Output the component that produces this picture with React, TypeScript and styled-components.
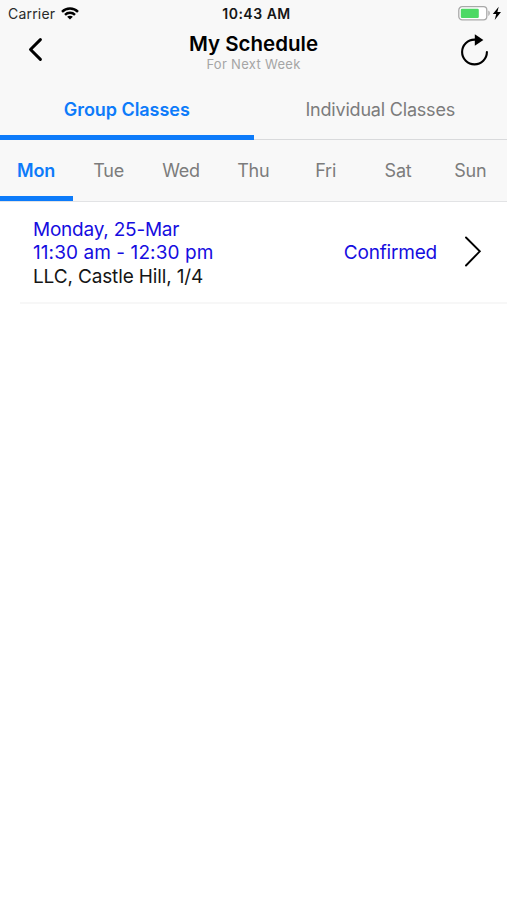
import React from "react";
import styled, { createGlobalStyle } from "styled-components";

const Global = createGlobalStyle`
  * { box-sizing: border-box; }
  body { margin: 0; background: #fff; }
`;

const Screen = styled.main`
  width: 507px;
  height: 900px;
  overflow: hidden;
  display: flex;
  flex-direction: column;
  background: #fff;
  font-family: Inter, "Liberation Sans", sans-serif;
  color: #000;
`;

const StatusBar = styled.div`
  height: 27px;
  flex: none;
  display: grid;
  grid-template-columns: 1fr auto 1fr;
  align-items: center;
  padding: 1px 5px 0 8px;
  background: #f8f8f8;
`;

const Carrier = styled.div`
  display: flex;
  align-items: center;
  gap: 6px;
  font-size: 14px;
  line-height: 18px;
  letter-spacing: 0.2px;
  color: #2a2a2a;

  svg {
    margin-bottom: 2px;
  }
`;

const Clock = styled.div`
  padding-left: 3px;
  font-size: 14px;
  line-height: 18px;
  font-weight: 600;
  letter-spacing: 0.5px;
  color: #151515;
`;

const Power = styled.div`
  display: flex;
  justify-content: flex-end;
  align-items: center;
`;

const NavBar = styled.header`
  height: 52px;
  flex: none;
  display: grid;
  grid-template-columns: 80px 1fr 80px;
  background: #f8f8f8;
`;

const NavButton = styled.button<{ $end?: boolean }>`
  border: 0;
  margin: 0;
  background: none;
  display: flex;
  align-items: flex-start;
  justify-content: ${(p) => (p.$end ? "flex-end" : "flex-start")};
  padding: ${(p) => (p.$end ? "5px 17px 0 0" : "9px 0 0 26px")};
`;

const Heading = styled.div`
  display: flex;
  flex-direction: column;
  align-items: center;
  padding-top: 5px;
`;

const Title = styled.h1`
  margin: 0;
  font-size: 20.5px;
  line-height: 24px;
  font-weight: 600;
  letter-spacing: 0;
`;

const Subtitle = styled.div`
  font-size: 13px;
  line-height: 16px;
  letter-spacing: 0.3px;
  color: #a5a5a5;
`;

const TabBar = styled.nav<{ $height: number; $line: string }>`
  height: ${(p) => p.$height}px;
  flex: none;
  display: flex;
  background: #f8f8f8;
  box-shadow: inset 0 -1px ${(p) => p.$line};
`;

const Tab = styled.button<{ $active?: boolean; $spacing?: number }>`
  flex: 1 1 0;
  min-width: 0;
  margin: 0;
  border: 0;
  padding: 0;
  background: none;
  font-family: inherit;
  font-size: 18px;
  line-height: 24px;
  white-space: nowrap;
  letter-spacing: ${(p) => p.$spacing ?? 0}px;
  font-weight: ${(p) => (p.$active ? 600 : 400)};
  color: ${(p) => (p.$active ? "#0d7bfa" : "#7c7c7c")};
  box-shadow: ${(p) => (p.$active ? "inset 0 -5px #0d7bfa" : "none")};
`;

const DayTab = styled(Tab)`
  ${(p) => p.$active && "flex: 0 0 73px;"}
  margin-bottom: 1px;
  padding-top: 1px;
  padding-right: 1px;
  letter-spacing: -0.25px;
`;

const ClassRow = styled.article`
  height: 102px;
  flex: none;
  margin-left: 20px;
  padding: 0 25px 0 13px;
  display: flex;
  align-items: center;
  border-bottom: 2px solid #f7f7f7;
`;

const Details = styled.div`
  flex: 1;
  display: flex;
  flex-direction: column;
  padding-top: 2px;
`;

const Line = styled.div<{ $tone?: "blue"; $spacing?: number }>`
  font-size: 19px;
  line-height: 23.4px;
  white-space: nowrap;
  letter-spacing: ${(p) => p.$spacing ?? 0}px;
  color: ${(p) => (p.$tone === "blue" ? "#160de0" : "#151515")};
`;

const Status = styled(Line)`
  padding-top: 2px;
`;

const ChevronSlot = styled.div`
  display: flex;
  margin-left: 27px;
`;

const WifiIcon = () => (
  <svg width="18" height="13" viewBox="0 0 18 13" fill="none" stroke="#000" strokeWidth="2.4">
    <path d="M1 4.8C5.4.4 12.6.4 17 4.8" />
    <path d="M4 7.9c2.8-2.8 7.2-2.8 10 0" />
    <path d="M9 12.6 6.1 9.8c1.6-1.5 4.2-1.5 5.8 0Z" fill="#000" stroke="none" />
  </svg>
);

const BatteryIcon = () => (
  <svg width="44" height="16" viewBox="0 0 44 16">
    <rect x="0.8" y="0.7" width="28" height="13.2" rx="3.4" fill="#fff" stroke="#a9a9a9" strokeWidth="1.3" />
    <rect x="2.8" y="2.7" width="18" height="9.2" rx="1.2" fill="#4cd964" />
    <path d="M30.3 4.6c2 .8 2 4.6 0 5.4Z" fill="#a9a9a9" />
    <path d="M40.7 0.8 34.8 8h3.4l-1.5 6 6.3-8h-3.6Z" fill="#000" />
  </svg>
);

const BackIcon = () => (
  <svg width="18" height="27" viewBox="0 0 18 27" fill="none" stroke="#000" strokeWidth="3" strokeLinecap="round" strokeLinejoin="round">
    <path d="M14.4 3.6 4.5 13.5l9.9 9.9" />
  </svg>
);

const RefreshIcon = () => (
  <svg width="30" height="34" viewBox="0 0 30 34">
    <path d="M26.9 20A12.4 12.4 0 1 1 14.5 7.6H18" fill="none" stroke="#000" strokeWidth="2.1" strokeLinecap="round" />
    <path d="M14.8 2.2 23.4 8.1l-8.6 5.7Z" fill="#000" />
  </svg>
);

const ChevronIcon = () => (
  <svg width="18" height="32" viewBox="0 0 18 32" fill="none" stroke="#000" strokeWidth="1.9" strokeLinecap="round">
    <path d="M2 1.5 15.8 15.3 2 29.5" />
  </svg>
);

const days = ["Mon", "Tue", "Wed", "Thu", "Fri", "Sat", "Sun"];

export default function App() {
  return (
    <Screen>
      <Global />
      <StatusBar>
        <Carrier>
          Carrier
          <WifiIcon />
        </Carrier>
        <Clock>10:43 AM</Clock>
        <Power>
          <BatteryIcon />
        </Power>
      </StatusBar>
      <NavBar>
        <NavButton aria-label="Back">
          <BackIcon />
        </NavButton>
        <Heading>
          <Title>My Schedule</Title>
          <Subtitle>For Next Week</Subtitle>
        </Heading>
        <NavButton $end aria-label="Refresh">
          <RefreshIcon />
        </NavButton>
      </NavBar>
      <TabBar $height={61} $line="#d9dadc">
        <Tab $active $spacing={-0.05}>Group Classes</Tab>
        <Tab $spacing={-0.2}>Individual Classes</Tab>
      </TabBar>
      <TabBar $height={62} $line="#e2e3e5">
        {days.map((day, i) => (
          <DayTab key={day} $active={i === 0}>
            {day}
          </DayTab>
        ))}
      </TabBar>
      <ClassRow>
        <Details>
          <Line $tone="blue" $spacing={-0.22}>Monday, 25-Mar</Line>
          <Line $tone="blue" $spacing={0.08}>11:30 am - 12:30 pm</Line>
          <Line $spacing={-0.14}>LLC, Castle Hill, 1/4</Line>
        </Details>
        <Status $tone="blue" $spacing={-0.2}>Confirmed</Status>
        <ChevronSlot>
          <ChevronIcon />
        </ChevronSlot>
      </ClassRow>
    </Screen>
  );
}
